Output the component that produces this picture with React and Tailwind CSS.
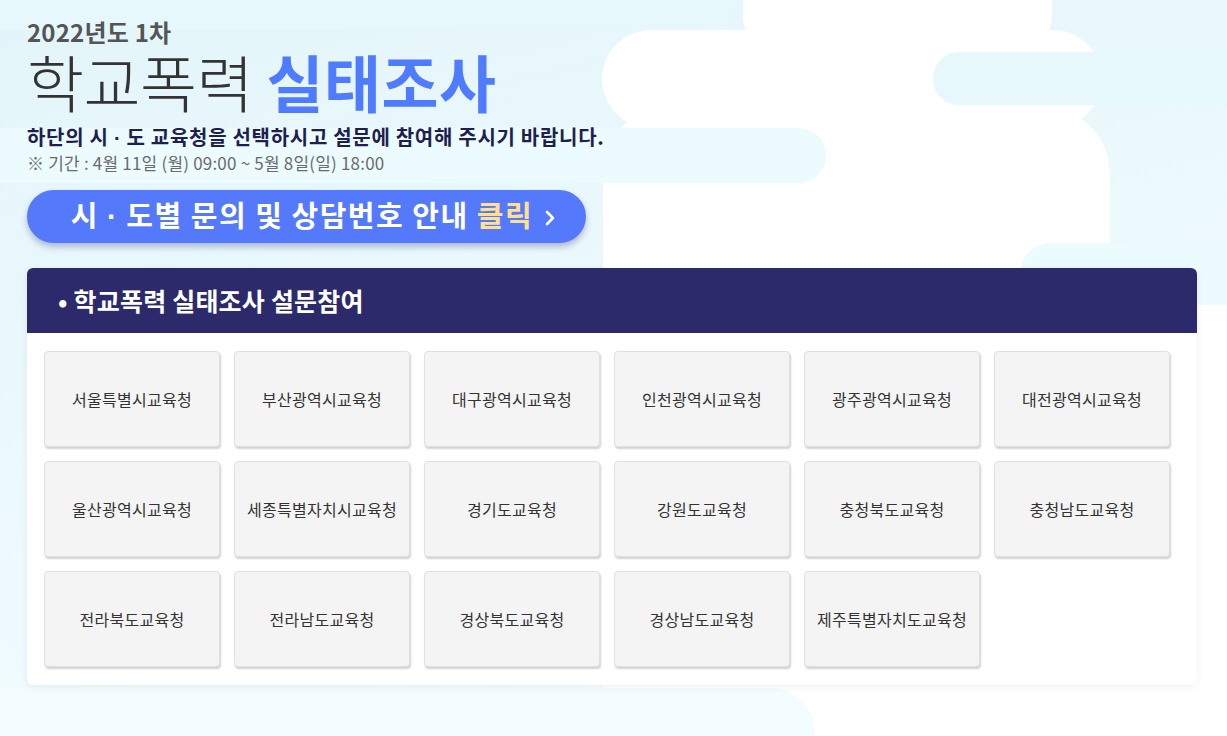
import React from 'react';

const offices = [
  '서울특별시교육청', '부산광역시교육청', '대구광역시교육청', '인천광역시교육청', '광주광역시교육청', '대전광역시교육청',
  '울산광역시교육청', '세종특별자치시교육청', '경기도교육청', '강원도교육청', '충청북도교육청', '충청남도교육청',
  '전라북도교육청', '전라남도교육청', '경상북도교육청', '경상남도교육청', '제주특별자치도교육청',
];

// narrow middle dot (CJK font draws it full width)
const Dot = () => <span style={{ fontFamily: '"Liberation Sans", sans-serif' }}>·</span>;

// decorative cloud background
const Clouds = () => (
  <svg className="absolute inset-0 w-full h-full" viewBox="0 0 1227 736" preserveAspectRatio="none">
    <defs>
      <linearGradient id="bg" x1="0" y1="0" x2="0.4" y2="1">
        <stop offset="0" stopColor="#e3f5fa" />
        <stop offset="1" stopColor="#f3fcff" />
      </linearGradient>
    </defs>
    <rect width="1227" height="736" fill="url(#bg)" />
    <g fill="#ffffff">
      <rect x="743" y="-100" width="309" height="152" rx="35" />
      <rect x="602" y="30" width="500" height="98" rx="49" />
      <rect x="603" y="105" width="507" height="700" rx="70" />
      <rect x="1000" y="280" width="400" height="600" rx="40" />
    </g>
    <g fill="#e6f8fc">
      <rect x="-100" y="-60" width="843" height="90" rx="40" />
      <rect x="933" y="52" width="400" height="53" rx="26" />
    </g>
    <g fill="#ecfbfe">
      <rect x="-100" y="128" width="926" height="55" rx="27" />
      <rect x="1020" y="243" width="400" height="62" rx="31" />
    </g>
    <rect x="-100" y="688" width="915" height="140" rx="45" fill="#f3fcff" />
  </svg>
);

export default function App() {
  return (
    <div
      className="relative w-full h-[736px] overflow-hidden"
      style={{ fontFamily: '"Noto Sans CJK KR", "Noto Sans", sans-serif' }}
    >
      <Clouds />
      <div className="relative pl-[27px] pt-[18px]">
        <div className="text-[24px] leading-[28px] font-bold text-[#555555] tracking-[0.2px]">2022년도 1차</div>
        <h1 className="text-[62px] leading-[70px] tracking-[-0.5px] text-[#333333] font-light">
          학교폭력 <span className="font-bold text-[#4f7cff] tracking-[0.5px]">실태조사</span>
        </h1>
        <p className="mt-[8px] text-[20px] leading-[26px] font-bold text-[#1f1f4f] tracking-[0.7px]">
          하단의 시 <Dot /> 도 교육청을 선택하시고 설문에 참여해 주시기 바랍니다.
        </p>
        <p className="text-[17px] leading-[24px] text-[#6b6b6b] tracking-[0.2px]">
          ※ 기간 : 4월 11일 (월) 09:00 ~ 5월 8일(일) 18:00
        </p>
        <button
          className="mt-[15px] w-[559px] h-[53px] rounded-full bg-[#5579fb] shadow-[0_4px_6px_rgba(60,70,140,0.35)] flex items-center justify-center gap-[11px] text-white font-bold text-[29px] tracking-[1.5px] pl-[14px]"
        >
          <span>
            시 <Dot /> 도별 문의 및 상담번호 안내 <span className="text-[#ffe08f]">클릭</span>
          </span>
          <svg width="12" height="18" viewBox="0 0 12 18" className="mt-[2px]">
            <path d="M3 3l6 6-6 6" fill="none" stroke="#ffffff" strokeWidth="2.6" strokeLinecap="round" strokeLinejoin="round" />
          </svg>
        </button>

        <div className="mt-[25px] w-[1170px] rounded-[6px] bg-white shadow-[0_2px_8px_rgba(0,0,0,0.06)] overflow-hidden">
          <div className="h-[65px] bg-[#2c2a6b] flex items-center pl-[31px]">
            <h2 className="text-white font-bold text-[25px] tracking-[0.2px]">• 학교폭력 실태조사 설문참여</h2>
          </div>
          <div className="pt-[18px] pb-[18px] pl-[17px] grid grid-cols-[repeat(6,176px)] auto-rows-[96px] gap-[14px]">
            {offices.map((name) => (
              <button
                key={name}
                className="rounded-[4px] bg-[#f4f4f4] border border-[#e0e0e0] shadow-[1px_2px_2px_rgba(0,0,0,0.18)] flex items-center justify-center text-[16px] text-[#333333] tracking-[0.3px]"
              >
                {name}
              </button>
            ))}
          </div>
        </div>
      </div>
    </div>
  );
}
